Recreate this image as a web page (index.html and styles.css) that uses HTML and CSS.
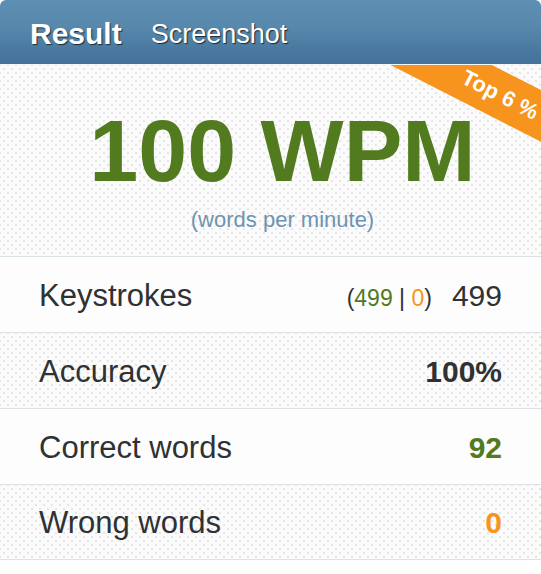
FILE: index.html
```html
<!DOCTYPE html>
<html>
<head>
<meta charset="utf-8">
<link rel="stylesheet" href="styles.css">
</head>
<body>
<div class="card">
  <div class="header">
    <span class="tab tab-active">Result</span>
    <span class="tab">Screenshot</span>
  </div>
  <div class="hero">
    <div class="ribbon">Top 6 %</div>
    <div class="wpm">100 WPM</div>
    <div class="unit">(words per minute)</div>
  </div>
  <div class="row row-plain">
    <span class="label">Keystrokes</span>
    <span class="value"><span class="detail">(<span class="green">499</span> | <span class="orange">0</span>)</span>499</span>
  </div>
  <div class="row row-dots">
    <span class="label">Accuracy</span>
    <span class="value bold">100%</span>
  </div>
  <div class="row row-plain">
    <span class="label">Correct words</span>
    <span class="value bold green">92</span>
  </div>
  <div class="row row-dots">
    <span class="label">Wrong words</span>
    <span class="value bold orange">0</span>
  </div>
</div>
</body>
</html>
```

FILE: styles.css
```css
html, body {
  margin: 0;
  padding: 0;
  background: #ffffff;
}
body {
  font-family: "Liberation Sans", Arial, sans-serif;
  color: #2f3133;
}
.card {
  width: 541px;
  background: #fcfcfc;
}
.header {
  height: 65px;
  box-sizing: border-box;
  padding: 4px 0 0 30px;
  display: flex;
  align-items: center;
  gap: 29px;
  border-radius: 6px 6px 0 0;
  background: linear-gradient(#5d8fb3 0%, #5889ad 40%, #4a7aa0 75%, #44729a 100%);
  border-bottom: 1px solid #f4f6f7;
}
.tab {
  color: #ffffff;
  font-size: 27px;
  text-shadow: 1px 1px 1px #1e2a33;
}
.tab-active {
  font-weight: bold;
  font-size: 30px;
}
.hero, .row-dots {
  background-color: #fbfbfb;
  background-image:
    radial-gradient(circle, #d6d6d6 0.5px, transparent 1px),
    radial-gradient(circle, #d6d6d6 0.5px, transparent 1px);
  background-size: 8px 8px, 8px 8px;
  background-position: 0 0, 4px 4px;
}
.hero {
  position: relative;
  overflow: hidden;
  height: 191px;
  box-sizing: border-box;
  padding: 42px 0 0 24px;
  text-align: center;
}
.ribbon {
  position: absolute;
  left: 350px;
  top: 7px;
  width: 300px;
  height: 46px;
  line-height: 46px;
  background: #f7941d;
  color: #ffffff;
  font-weight: bold;
  font-size: 22px;
  text-align: center;
  transform: rotate(27deg);
}
.wpm {
  font-size: 88px;
  line-height: 1;
  font-weight: bold;
  color: #527a1f;
}
.unit {
  margin-top: 14px;
  font-size: 22px;
  line-height: 1;
  color: #6d95b1;
}
.row {
  height: 76px;
  box-sizing: border-box;
  border-top: 1px solid #dbe2e2;
  display: flex;
  align-items: center;
  justify-content: space-between;
  padding: 2px 39px 0 39px;
  font-size: 30px;
}
.row:last-of-type {
  border-bottom: 1px solid #dbe2e2;
}
.row-plain {
  background: #fdfdfd;
}
.label {
  color: #2f3133;
  font-size: 31px;
}
.value {
  color: #2f3133;
  display: flex;
  align-items: baseline;
}
.detail {
  font-size: 23px;
  margin-right: 20px;
}
.bold {
  font-weight: bold;
}
.green {
  color: #527a1f;
}
.orange {
  color: #f7941d;
}
```
